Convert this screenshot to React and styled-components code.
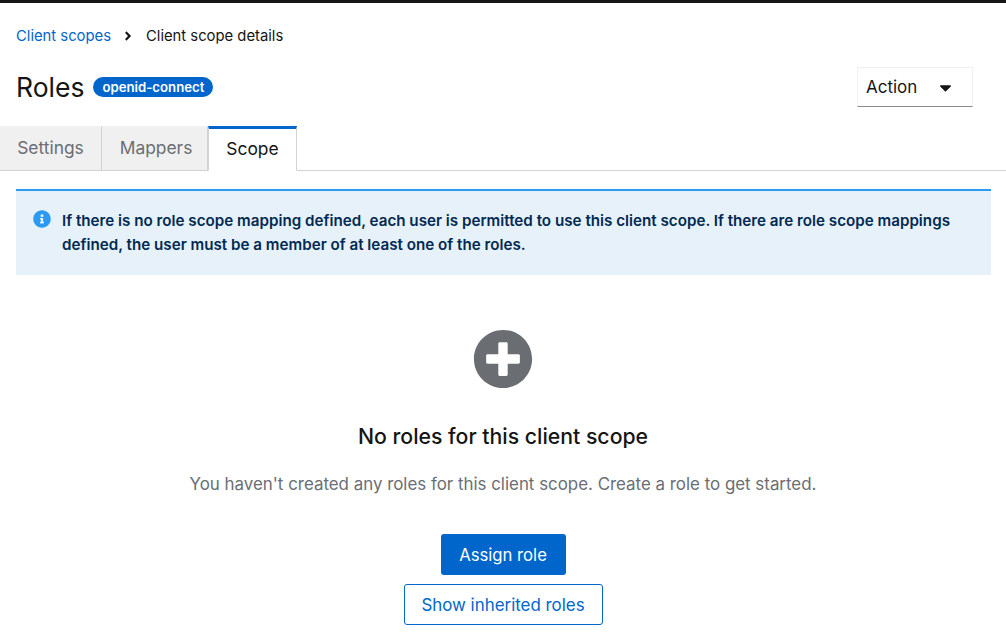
import React from 'react'
import styled, { createGlobalStyle } from 'styled-components'
import { FaAngleRight, FaCaretDown, FaInfoCircle, FaPlusCircle } from 'react-icons/fa'

const GlobalStyle = createGlobalStyle`
  html, body {
    margin: 0;
    padding: 0;
    background: #fff;
    overflow: hidden;
    font-family: Inter, "Liberation Sans", sans-serif;
    color: #151515;
  }
`

const Page = styled.div`
  height: 643px;
  border-top: 3px solid #151515;
  box-sizing: border-box;
  overflow: hidden;
`

const Breadcrumb = styled.nav`
  display: flex;
  align-items: center;
  height: 22px;
  margin: 22px 0 0 16px;
  font-size: 14.8px;
`

const CrumbLink = styled.a`
  color: #0066cc;
`

const CrumbDivider = styled.span`
  display: flex;
  margin: 0 11px 0 10px;
  font-size: 14px;
  color: #151515;
`

const Header = styled.div`
  display: flex;
  align-items: flex-start;
  justify-content: space-between;
  height: 59px;
  margin: 20px 33px 0 16px;
`

const TitleRow = styled.div`
  display: flex;
  align-items: center;
  height: 40px;
  gap: 9px;
`

const Title = styled.h1`
  margin: 0;
  font-size: 26.5px;
  font-weight: 400;
`

const Badge = styled.span`
  display: inline-flex;
  align-items: center;
  height: 20px;
  padding: 0 9px;
  border-radius: 10px;
  background: #0066cc;
  color: #fff;
  font-size: 13.2px;
  font-weight: 600;
`

const Dropdown = styled.button`
  display: flex;
  align-items: center;
  justify-content: space-between;
  box-sizing: border-box;
  width: 116px;
  height: 40px;
  padding: 0 17px 0 8px;
  background: #fff;
  border: 1px solid #f0f0f0;
  border-bottom: 1px solid #8a8d90;
  color: #151515;
  font: inherit;
  font-size: 17px;
`

const Tabs = styled.div`
  display: flex;
  height: 45px;
  box-sizing: border-box;
  border-bottom: 1px solid #d2d2d2;
`

const Tab = styled.div`
  display: flex;
  align-items: center;
  justify-content: center;
  box-sizing: border-box;
  width: ${p => p.$width}px;
  height: 45px;
  padding-bottom: 2px;
  padding-left: ${p => p.$inset || 0}px;
  font-size: 17.4px;
  background: ${p => (p.$active ? '#fff' : '#f0f0f0')};
  color: ${p => (p.$active ? '#151515' : '#6a6e73')};
  border-right: 1px solid #d2d2d2;
  border-top: ${p => (p.$active ? '3px solid #0066cc' : '1px solid transparent')};
  border-left: ${p => (p.$active ? '1px solid #d2d2d2' : 'none')};
  border-bottom: ${p => (p.$active ? '1px solid #fff' : '1px solid #d2d2d2')};
`

const Alert = styled.div`
  display: flex;
  gap: 11px;
  box-sizing: border-box;
  height: 86px;
  margin: 18px 15px 0 16px;
  padding: 18px 16px 0 17px;
  background: #e7f1fa;
  border-top: 2px solid #2b9af3;
`

const AlertIcon = styled.span`
  display: flex;
  padding-top: 1px;
  color: #2b9af3;
  font-size: 18px;
`

const AlertText = styled.p`
  margin: 0;
  font-size: 15.2px;
  font-weight: 600;
  line-height: 24px;
  color: #002952;
`

const Empty = styled.section`
  display: flex;
  flex-direction: column;
  align-items: center;
  padding-top: 54px;
`

const EmptyIcon = styled.span`
  display: flex;
  color: #6a6e73;
  font-size: 60px;
`

const EmptyTitle = styled.h2`
  margin: 32px 0 0;
  font-size: 21.25px;
  line-height: 30px;
  font-weight: 500;
`

const EmptyBody = styled.p`
  margin: 21px 0 0;
  font-size: 16.9px;
  line-height: 24px;
  color: #6a6e73;
`

const PrimaryButton = styled.button`
  box-sizing: border-box;
  width: 125px;
  height: 41px;
  margin-top: 38px;
  background: #0066cc;
  border: none;
  border-radius: 3px;
  color: #fff;
  font: inherit;
  font-size: 16.7px;
`

const SecondaryButton = styled.button`
  box-sizing: border-box;
  width: 199px;
  height: 41px;
  margin-top: 9px;
  background: #fff;
  border: 1px solid #0066cc;
  border-radius: 3px;
  color: #0066cc;
  font: inherit;
  font-size: 16.9px;
`

export default function App () {
  return (
    <>
      <GlobalStyle />
      <Page>
        <Breadcrumb>
          <CrumbLink>Client scopes</CrumbLink>
          <CrumbDivider><FaAngleRight /></CrumbDivider>
          <span>Client scope details</span>
        </Breadcrumb>
        <Header>
          <TitleRow>
            <Title>Roles</Title>
            <Badge>openid-connect</Badge>
          </TitleRow>
          <Dropdown>Action <FaCaretDown size={19} /></Dropdown>
        </Header>
        <Tabs>
          <Tab $width={102}>Settings</Tab>
          <Tab $width={106} $inset={3}>Mappers</Tab>
          <Tab $width={89} $active>Scope</Tab>
        </Tabs>
        <Alert>
          <AlertIcon><FaInfoCircle /></AlertIcon>
          <AlertText>
            If there is no role scope mapping defined, each user is permitted to use this client scope. If there are role scope mappings defined, the user must be a member of at least one of the roles.
          </AlertText>
        </Alert>
        <Empty>
          <EmptyIcon><FaPlusCircle /></EmptyIcon>
          <EmptyTitle>No roles for this client scope</EmptyTitle>
          <EmptyBody>You haven't created any roles for this client scope. Create a role to get started.</EmptyBody>
          <PrimaryButton>Assign role</PrimaryButton>
          <SecondaryButton>Show inherited roles</SecondaryButton>
        </Empty>
      </Page>
    </>
  )
}
